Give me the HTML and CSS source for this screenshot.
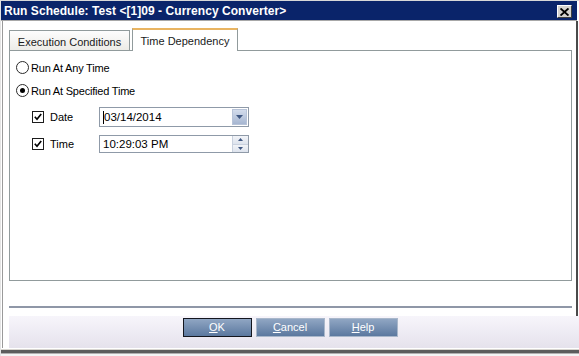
FILE: index.html
```html
<!DOCTYPE html>
<html>
<head>
<meta charset="utf-8">
<link rel="stylesheet" href="styles.css">
</head>
<body>
<div class="window">
  <div class="titlebar">
    <span class="title">Run Schedule: Test &lt;[1]09 - Currency Converter&gt;</span>
    <span class="close"><svg width="9" height="8" viewBox="0 0 9 8"><path d="M0.5 0.5 L8.5 7.5 M8.5 0.5 L0.5 7.5" stroke="#000" stroke-width="1.9" fill="none"/></svg></span>
  </div>
  <div class="body">
    <div class="main">
      <div class="tabs">
        <div class="tab">Execution Conditions</div>
        <div class="tab active">Time Dependency</div>
      </div>
      <div class="panel">
        <div class="radio-row"><span class="radio"></span><span class="text">Run At Any Time</span></div>
        <div class="radio-row"><span class="radio checked"><span class="dot"></span></span><span class="text">Run At Specified Time</span></div>
        <div class="field-row date-row">
          <span class="check"><svg width="8" height="8" viewBox="0 0 8 8"><path d="M0.8 3.8 L3 6.2 L7.2 1" stroke="#000" stroke-width="1.7" fill="none"/></svg></span>
          <span class="label">Date</span>
          <div class="input combo">
            <span class="value"><span class="caret"></span>03/14/2014</span>
            <span class="drop"><svg width="7" height="4" viewBox="0 0 7 4"><path d="M0 0 H7 L3.5 4 Z" fill="#3f5782"/></svg></span>
          </div>
        </div>
        <div class="field-row time-row">
          <span class="check"><svg width="8" height="8" viewBox="0 0 8 8"><path d="M0.8 3.8 L3 6.2 L7.2 1" stroke="#000" stroke-width="1.7" fill="none"/></svg></span>
          <span class="label">Time</span>
          <div class="input spin">
            <span class="value">10:29:03 PM</span>
            <span class="spinner">
              <span class="sbtn"><svg width="5" height="3" viewBox="0 0 5 3"><path d="M0 3 H5 L2.5 0 Z" fill="#3f5782"/></svg></span>
              <span class="sbtn"><svg width="5" height="3" viewBox="0 0 5 3"><path d="M0 0 H5 L2.5 3 Z" fill="#3f5782"/></svg></span>
            </span>
          </div>
        </div>
      </div>
      <div class="separator"></div>
    </div>
    <div class="buttonbar">
      <button class="btn default"><u>O</u>K</button>
      <button class="btn"><u>C</u>ancel</button>
      <button class="btn"><u>H</u>elp</button>
    </div>
  </div>
  <div class="bottom-edge"></div>
</div>
</body>
</html>
```

FILE: styles.css
```css
html, body {
  margin: 0;
  padding: 0;
}
body {
  width: 579px;
  height: 356px;
  overflow: hidden;
  background: #ffffff;
  font-family: "Liberation Sans", Arial, sans-serif;
  font-size: 11px;
  color: #000;
}
.window {
  width: 579px;
  height: 356px;
  display: flex;
  flex-direction: column;
  box-sizing: border-box;
  border-top: 1px solid #d8d8d8;
  border-left: 1px solid #e4e4e4;
}
.titlebar {
  height: 20px;
  flex: none;
  background: #0a246a;
  display: flex;
  align-items: center;
  justify-content: space-between;
  padding: 0 5px 0 3px;
  margin-right: 2px;
  border-bottom: 1px solid #a8a8a8;
  box-sizing: border-box;
}
.title {
  color: #ffffff;
  font-weight: bold;
  font-size: 12px;
  letter-spacing: 0.05px;
  line-height: 20px;
}
.close {
  width: 15px;
  height: 13px;
  background: #d6d3ce;
  border-top: 1px solid #ffffff;
  border-left: 1px solid #ffffff;
  border-right: 1px solid #404040;
  border-bottom: 1px solid #404040;
  box-sizing: border-box;
  display: flex;
  align-items: center;
  justify-content: center;
  margin-top: 2px;
}
.body {
  flex: 1;
  display: flex;
  flex-direction: column;
  margin-left: 1px;
  border-left: 1px solid #9a9a9a;
}
.main {
  padding: 7px 5px 8px 6px;
  border-right: 2px solid #4a4a4a;
  margin-right: 1px;
  display: flex;
  flex-direction: column;
}
.tabs {
  display: flex;
  align-items: flex-end;
  height: 23px;
  margin-bottom: -1px;
  gap: 2px;
}
.tab {
  box-sizing: border-box;
  height: 21px;
  width: 121px;
  border: 1px solid #919b9c;
  border-bottom: none;
  background: linear-gradient(#fdfdfd, #ecebe6);
  display: flex;
  align-items: center;
  justify-content: center;
  font-size: 11px;
  color: #1a1a1a;
  padding-top: 1px;
}
.tab.active {
  position: relative;
  z-index: 1;
  height: 23px;
  width: 106px;
  background: #ffffff;
  border-top: 2px solid #e9b461;
  padding-top: 0;
}
.panel {
  box-sizing: border-box;
  width: 563px;
  height: 231px;
  border: 1px solid #919b9c;
  background: #ffffff;
  padding: 5px 0 0 6px;
  display: flex;
  flex-direction: column;
}
.radio-row {
  height: 23px;
  display: flex;
  align-items: center;
}
.radio {
  box-sizing: border-box;
  width: 13px;
  height: 13px;
  border: 1px solid #2a2a2a;
  border-radius: 50%;
  background: #ffffff;
  display: flex;
  align-items: center;
  justify-content: center;
  margin-right: 2px;
}
.dot {
  width: 5px;
  height: 5px;
  border-radius: 50%;
  background: #000;
}
.text {
  font-size: 11px;
  letter-spacing: -0.2px;
}
.field-row {
  display: flex;
  align-items: center;
  padding-left: 16px;
}
.date-row {
  height: 22px;
  margin-top: 4px;
}
.time-row {
  height: 20px;
  margin-top: 6px;
}
.check {
  box-sizing: border-box;
  width: 12px;
  height: 12px;
  border: 1px solid #1c1c1c;
  background: #fff;
  display: flex;
  align-items: center;
  justify-content: center;
}
.label {
  width: 49px;
  margin-left: 6px;
  font-size: 11px;
}
.input {
  box-sizing: border-box;
  width: 150px;
  border: 1px solid #8f9aa8;
  background: #fff;
  display: flex;
  align-items: stretch;
}
.combo {
  height: 20px;
}
.spin {
  height: 18px;
}
.value {
  flex: 1;
  display: flex;
  align-items: center;
  padding-left: 3px;
  font-size: 11.5px;
}
.caret {
  width: 1px;
  height: 13px;
  background: #000;
}
.drop {
  width: 15px;
  margin: 1px;
  background: linear-gradient(#d3dcec, #a6b6d1);
  border: 1px solid #b7c3d8;
  box-sizing: border-box;
  display: flex;
  align-items: center;
  justify-content: center;
}
.spinner {
  width: 15px;
  display: flex;
  flex-direction: column;
  border-left: 1px solid #c9d1de;
}
.sbtn {
  flex: 1;
  display: flex;
  align-items: center;
  justify-content: center;
  background: linear-gradient(#f2f4f8, #dde3ed);
  border-bottom: 1px solid #c9d1de;
}
.sbtn:last-child {
  border-bottom: none;
}
.separator {
  margin-top: 25px;
  height: 2px;
  width: 563px;
  background: #8f97a7;
}
.buttonbar {
  flex: 1;
  margin-left: 6px;
  background: linear-gradient(#f7f5fb, #e5e2ec);
  display: flex;
  justify-content: center;
  align-items: flex-start;
  padding-top: 2px;
  padding-right: 8px;
  gap: 4px;
}
.btn {
  box-sizing: border-box;
  width: 69px;
  height: 19px;
  padding: 0;
  border: 1px solid #a9b7ca;
  background: linear-gradient(#90a6c3, #5b789f);
  color: #ffffff;
  font-family: "Liberation Sans", Arial, sans-serif;
  font-size: 11px;
  line-height: 17px;
}
.btn.default {
  border: 1px solid #14161e;
}
.bottom-edge {
  height: 8px;
  flex: none;
  background: linear-gradient(#ffffff 0, #ffffff 1px, #d8d6d0 1px, #d8d6d0 2px, #5c5c5c 2px, #5c5c5c 5px, #b0b0b0 5px, #b0b0b0 6px, #f4f4f4 6px);
}
```
